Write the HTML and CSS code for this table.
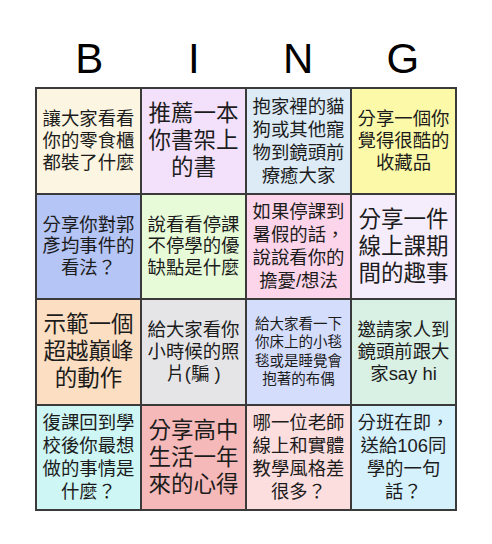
FILE: index.html
```html
<!DOCTYPE html>
<html>
<head>
<meta charset="utf-8">
<link rel="stylesheet" href="styles.css">
</head>
<body>
<div class="card">
  <div class="head">
    <div class="letter">B</div>
    <div class="letter">I</div>
    <div class="letter">N</div>
    <div class="letter">G</div>
  </div>
  <div class="grid">
    <div class="cell c1 md">讓大家看看<br>你的零食櫃<br>都裝了什麼</div>
    <div class="cell c2 lg">推薦一本<br>你書架上<br>的書</div>
    <div class="cell c3 md4">抱家裡的貓<br>狗或其他寵<br>物到鏡頭前<br>療癒大家</div>
    <div class="cell c4 md">分享一個你<br>覺得很酷的<br>收藏品</div>

    <div class="cell c5 md">分享你對郭<br>彥均事件的<br>看法？</div>
    <div class="cell c6 md">說看看停課<br>不停學的優<br>缺點是什麼</div>
    <div class="cell c7 md4">如果停課到<br>暑假的話，<br>說說看你的<br>擔憂/想法</div>
    <div class="cell c8 lg">分享一件<br>線上課期<br>間的趣事</div>

    <div class="cell c9 lg">示範一個<br>超越巔峰<br>的動作</div>
    <div class="cell c10 md">給大家看你<br>小時候的照<br>片(騙 )</div>
    <div class="cell c11 sm">給大家看一下<br>你床上的小毯<br>毯或是睡覺會<br>抱著的布偶</div>
    <div class="cell c12 md">邀請家人到<br>鏡頭前跟大<br>家say hi</div>

    <div class="cell c13 md4">復課回到學<br>校後你最想<br>做的事情是<br>什麼？</div>
    <div class="cell c14 lg">分享高中<br>生活一年<br>來的心得</div>
    <div class="cell c15 md4">哪一位老師<br>線上和實體<br>教學風格差<br>很多？</div>
    <div class="cell c16 md4">分班在即，<br>送給106同<br>學的一句<br>話？</div>
  </div>
</div>
</body>
</html>
```
FILE: styles.css
```css
html, body {
  margin: 0;
  padding: 0;
  background: #ffffff;
}
.card {
  width: 422px;
  margin-left: 35px;
}
.head {
  height: 87px;
  display: grid;
  grid-template-columns: repeat(4, 1fr);
  align-items: end;
  padding: 0 2px;
  box-sizing: border-box;
}
.letter {
  font-family: "Liberation Sans", Arial, sans-serif;
  font-size: 42px;
  line-height: 42px;
  text-align: center;
  color: #000;
  padding-bottom: 7px;
}
.grid {
  display: grid;
  grid-template-columns: repeat(4, 103px);
  grid-template-rows: repeat(4, 103.5px);
  gap: 2px;
  padding: 2px;
  background: #3a3a3a;
  width: 422px;
  box-sizing: border-box;
}
.cell {
  display: flex;
  align-items: center;
  justify-content: center;
  text-align: center;
  font-family: "Liberation Sans", "Noto Sans CJK TC", sans-serif;
  color: #1c1c1c;
  overflow: hidden;
}
.lg { font-size: 22.5px; line-height: 27px; }
.md { font-size: 18.4px; line-height: 21.7px; }
.md4 { font-size: 18.4px; line-height: 23px; }
.sm { font-size: 14.5px; line-height: 18.3px; }

.c1 { background: #fbf5e1; }
.c2 { background: #f3e1fb; }
.c3 { background: #dcebf6; }
.c4 { background: #fcfaa8; }
.c5 { background: #b5c5f6; }
.c6 { background: #e8fbd9; }
.c7 { background: #fcd5ea; }
.c8 { background: #f6edfc; }
.c9 { background: #fcdfc2; }
.c10 { background: #e5e5e8; }
.c11 { background: #d5ddfc; }
.c12 { background: #d9f0e4; }
.c13 { background: #cdf6f4; }
.c14 { background: #f5b9b9; }
.c15 { background: #fcdede; }
.c16 { background: #d5f1fc; }
```
